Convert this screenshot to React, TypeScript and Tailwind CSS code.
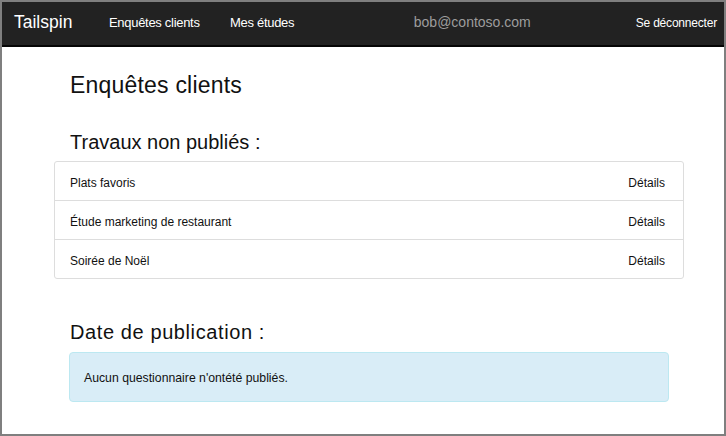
const rows = ["Plats favoris", "Étude marketing de restaurant", "Soirée de Noël"];

export default function App() {
  return (
    <div
      className="w-[726px] h-[436px] border-2 border-[#7f7f7f] bg-white overflow-hidden flex flex-col"
      style={{ fontFamily: '"Liberation Sans", Arial, sans-serif' }}
    >
      <nav className="h-[45px] shrink-0 bg-[#222222] border-b-2 border-[#050505] flex items-center pb-[2px] text-white">
        <span className="ml-[12px] text-[17.5px] w-[95px]">Tailspin</span>
        <span className="text-[13px] tracking-[-0.3px] w-[121px]">Enquêtes clients</span>
        <span className="text-[13px] tracking-[-0.3px]">Mes études</span>
        <span className="ml-auto mr-[105px] text-[14px] text-[#9d9d9d]">bob@contoso.com</span>
        <span className="mr-[7px] text-[12px] tracking-[-0.2px]">Se déconnecter</span>
      </nav>

      <main className="pl-[52px] flex flex-col text-[#111]">
        <h1 className="ml-[16px] mt-[25px] text-[23px] tracking-[0.2px] leading-[26px]">Enquêtes clients</h1>
        <h2 className="ml-[16px] mt-[33px] text-[20px] leading-[22px]">Travaux non publiés :</h2>
        <ul className="mt-[8px] w-[630px] border border-[#dddddd] rounded-[3px]">
          {rows.map((r, i) => (
            <li
              key={r}
              className={
                "flex items-center justify-between pt-[3px] pl-[15px] pr-[18px] text-[12px] " +
                (i > 0 ? "border-t border-[#dddddd] h-[39px]" : "h-[38px]")
              }
            >
              <span>{r}</span>
              <span>Détails</span>
            </li>
          ))}
        </ul>
        <h2 className="ml-[16px] mt-[42px] text-[20px] tracking-[0.6px] leading-[22px]">Date de publication :</h2>
        <div className="ml-[15px] mt-[9px] w-[600px] h-[50px] bg-[#d9edf7] border border-[#bce8f1] rounded-[4px] flex items-center pt-[3px] pl-[14px] text-[12.25px] text-[#111]">
          Aucun questionnaire n'ontété publiés.
        </div>
      </main>
    </div>
  );
}
